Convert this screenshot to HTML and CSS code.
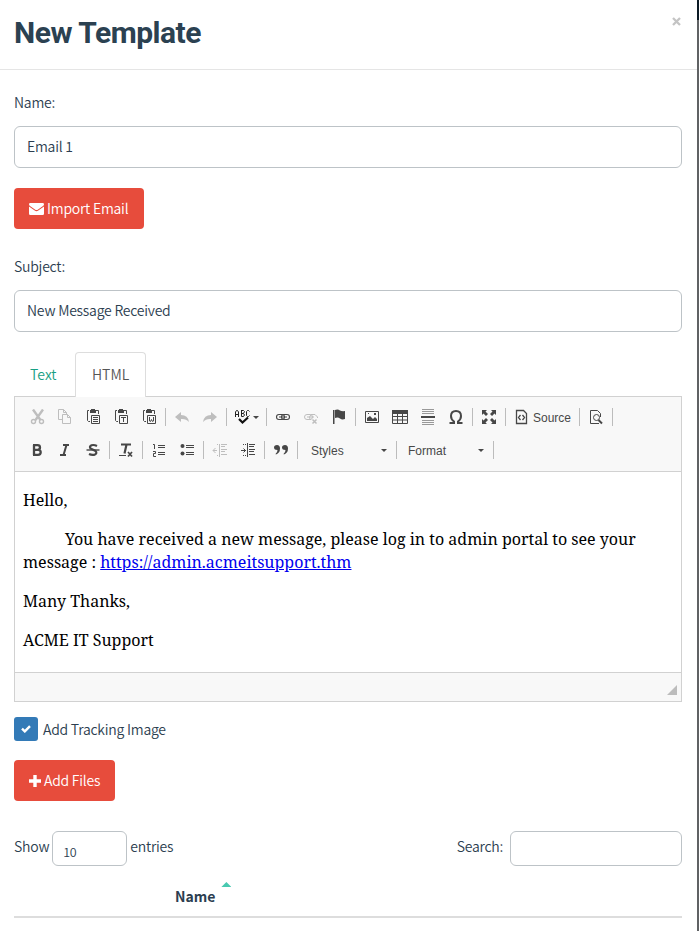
FILE: index.html
```html
<!DOCTYPE html>
<html lang="en">
<head>
<meta charset="utf-8">
<title>New Template</title>
<link rel="stylesheet" href="styles.css">
</head>
<body>
<div class="modal">
  <header class="modal-header">
    <h1>New Template</h1>
    <button class="close" aria-label="Close"><svg width="9" height="9" viewBox="0 0 9 9"><path d="M1 1l7 7M8 1l-7 7" stroke="#c4c4c4" stroke-width="2.300"/></svg></button>
  </header>
  <main class="modal-body">
    <label class="label">Name:</label>
    <div class="field">Email 1</div>
    <button class="btn import"><svg width="15" height="12" viewBox="0 0 15 12"><path fill="#fff" d="M0 1.3Q0 0 1.3 0h12.4Q15 0 15 1.3q0 .9-1 1.7L8.700 6.700q-1.200.8-2.400 0L1 3Q0 2.200 0 1.300zM0 3.600l5.700 4q1.800 1.100 3.600 0l5.700-4v7.100q0 1.300-1.300 1.300H1.300Q0 12 0 10.700z"/></svg><span>Import Email</span></button>
    <label class="label subject">Subject:</label>
    <div class="field">New Message Received</div>
    <nav class="tabs"><a class="tab">Text</a><a class="tab active">HTML</a></nav>
    <section class="editor">
      <div class="toolbar">
        <div class="row">
          <i class="b off"><svg viewBox="0 0 16 16"><path d="M4 0.500l7.500 10.500M14 .5L6.500 11" stroke-width="2.400"/><circle cx="4.500" cy="12.500" r="2" stroke-width="1.400"/><circle cx="12.500" cy="12.500" r="2" stroke-width="1.400"/></svg></i>
          <i class="b off"><svg viewBox="0 0 16 16"><path d="M5.500 10.500h-4v-10h5l3 3v2M6.500.5v3h3M5.500 5.500h5l3 3v6h-8zM10.500 5.500v3h3"/></svg></i>
          <i class="b"><svg viewBox="0 0 16 16"><path d="M4 1.500H2.500v10l1 1H5M11 1.500h2.500V5M6.500 6.500h8v8h-8zM8 8.500h5M8 10.500h5M8 12.500h5"/><path class="f" d="M5 1h1V0h4v1h1v3H5z"/></svg></i>
          <i class="b"><svg viewBox="0 0 16 16"><path d="M4 1.500H2.500v10l1 1H5M11 1.500h2.500V5M6.500 6.500h8v8h-8zM8 8.500h5M10.500 8v5"/><path class="f" d="M5 1h1V0h4v1h1v3H5z"/></svg></i>
          <i class="b"><svg viewBox="0 0 16 16"><path d="M4 1.500H2.500v10l1 1H5M11 1.500h2.500V5M6.500 6.500h8v8h-8zM8.500 8v4l1 .5 1-2 1 2 1-.5V8"/><path class="f" d="M5 1h1V0h4v1h1v3H5z"/></svg></i>
          <i class="sep"></i>
          <i class="b off"><svg viewBox="0 0 16 16"><path class="f" d="M1 8l6-5v3q7 0 8 7-3-3.500-8-3v3z"/></svg></i>
          <i class="b off"><svg viewBox="0 0 16 16"><path class="f" d="M15 8L9 3v3q-7 0-8 7 3-3.500 8-3v3z"/></svg></i>
          <i class="sep"></i>
          <i class="b spell"><svg viewBox="0 0 16 16"><path d="M.5 8V3l1-1.500h1l1 1.500v5M.5 5.500h3M6 1.500h2.500l1 1-1 2 1 1.500-1 1.500H6.500v-6M6.500 4.500h2M14.500 2.500l-1-1h-1l-1 1v4l1 1h1l1-1" stroke="#222"/><path d="M4 10l3.500 3.500L13 8.500" stroke="#111" stroke-width="2.200"/></svg><b class="arrow"></b></i>
          <i class="sep"></i>
          <i class="b"><svg viewBox="0 0 16 16"><rect x="1.500" y="5.500" width="8" height="5" rx="2.500" stroke-width="1.100"/><rect x="6.500" y="5.500" width="8" height="5" rx="2.500" stroke-width="1.100"/><path d="M4 8h8"/></svg></i>
          <i class="b off"><svg viewBox="0 0 16 16"><rect x="1.500" y="5.500" width="8" height="5" rx="2.500"/><path d="M8 10.500H7L6.500 8 8 5.500h4L14.500 8v1M4 8h7" /><path d="M9.500 10.500l4 4M13.500 10.500l-4 4" stroke-width="1.500"/></svg></i>
          <i class="b"><svg viewBox="0 0 16 16"><path class="f" d="M2 1h1.500v14H2zM4 1q3-1 5 .5 2 1 5 .5v8q-3 1-5-.5T4 9z"/></svg></i>
          <i class="sep"></i>
          <i class="b"><svg viewBox="0 0 16 16"><path d="M1.500 2.500h13v11h-13z"/><path class="f" d="M3 12V9l3-2 3 3 2-2 2 2v2zM10 4h2v2h-2zM4 4h1v1H4z"/></svg></i>
          <i class="b"><svg viewBox="0 0 16 16"><path d="M.5 3.500h15v11H.5zM5.500 4v10M10.500 4v10M1 7.500h14M1 11h14"/><path class="f" d="M0 1h16v4H0z"/></svg></i>
          <i class="b"><svg viewBox="0 0 16 16"><path d="M2 .5h12M2 2.500h12M2 4.500h12M2 11.500h12M2 13.500h12M2 15.500h12" stroke="#999"/><path class="f" d="M1 7h14v2H1z"/></svg></i>
          <i class="b"><svg viewBox="0 0 16 16"><path d="M1.500 14h4.500V12.500Q3 10.500 3 7 3 2 8 2t5 5Q13 10.500 10 12.500V14h4.500" stroke-width="2"/></svg></i>
          <i class="sep"></i>
          <i class="b"><svg viewBox="0 0 16 16"><path class="f" d="M1 1h5L4.500 2.500 7 5 5 7 2.500 4.500 1 6zM15 1v5l-1.500-1.500L11 7 9 5l2.500-2.500L10 1zM1 15v-5l1.500 1.500L5 9l2 2-2.500 2.500L6 15zM15 15h-5l1.500-1.500L9 11l2-2 2.500 2.500L15 10z"/></svg></i>
          <i class="sep"></i>
          <i class="b source"><svg viewBox="0 0 16 16"><path d="M2.500 1.500h7l3 3v10h-10zM6.500 6l-2 2.500 2 2.500M8.500 6l2 2.500-2 2.500" stroke-width="1.300"/></svg><span>Source</span></i>
          <i class="sep"></i>
          <i class="b"><svg viewBox="0 0 16 16"><path d="M12.500 8V4.500l-3-3h-7v13H11"/><circle cx="8.500" cy="8.500" r="3"/><path d="M10.500 11l3.500 3.500" stroke-width="2"/></svg></i>
          <i class="sep"></i>
        </div>
        <div class="row">
          <i class="b"><svg viewBox="0 0 16 16"><path d="M5 3v10M4 3.200h4.500q2.500 0 2.500 2.300T8.500 7.800H5h4q2.700 0 2.700 2.500T9 12.800H4" stroke-width="2.300"/></svg></i>
          <i class="b"><svg viewBox="0 0 16 16"><path d="M6 3h6M3 13h6M9.500 3l-3 10" stroke-width="2"/></svg></i>
          <i class="b"><svg viewBox="0 0 16 16"><path d="M12 4Q9 2.500 6.500 3.300 4 4.500 5.500 6.500L10.500 9q2 2.200-.7 3.600Q7 13.500 4 12" stroke-width="2.200"/><path d="M1.500 8h13" stroke-width="1.400"/></svg></i>
          <i class="sep"></i>
          <i class="b"><svg viewBox="0 0 16 16"><path d="M3 2.500h10M8.500 2.500l-2 9" stroke-width="2.200"/><path d="M1 13.500h7"/><path d="M10 10l4 4.500M14 10l-4 4.500" stroke-width="1.700"/></svg></i>
          <i class="sep"></i>
          <i class="b"><svg viewBox="0 0 16 16"><path d="M2 2.500h1.500V7M2 9.500h2.500v2h-2v3H5M7 3.500h7M7 5.500h7M7 10.500h7M7 12.500h7"/></svg></i>
          <i class="b"><svg viewBox="0 0 16 16"><circle class="f" cx="3.500" cy="4" r="2"/><circle class="f" cx="3.500" cy="11.500" r="2"/><path d="M7 3.500h8M7 5.500h8M7 10.500h8M7 12.500h8"/></svg></i>
          <i class="sep"></i>
          <i class="b off"><svg viewBox="0 0 16 16"><path d="M7.500 2v13M9 2.500h6M9 4.500h4M9 7.500h6M9 9.500h4M9 12.500h6M1 8.500h4M3.500 6L1 8.500 3.500 11M5 2.500h1M5 13.500h1"/></svg></i>
          <i class="b"><svg viewBox="0 0 16 16"><path d="M7.500 1v14M9 2.500h6M9 4.500h5M9 7.500h6M9 9.500h5M9 12.500h6M1 8.500h5M3.500 6.500l2 2-2 2M3 2.500h1M5 2.500h1M3 13.500h1M5 13.500h1"/></svg></i>
          <i class="sep"></i>
          <i class="b"><svg viewBox="0 0 16 16"><path class="f" d="M4 3q3 0 3 3.500Q7 11 3 12.500L2.500 12Q4.500 10.500 4.500 8 1 8 1 5.500 1 3 4 3zM12 3q3 0 3 3.500 0 4.500-4 6l-.5-.5q2-1.500 2-4Q9 8 9 5.500 9 3 12 3z"/></svg></i>
          <i class="sep"></i>
          <div class="combo styles"><span>Styles</span><b class="arrow"></b></div>
          <i class="sep"></i>
          <div class="combo"><span>Format</span><b class="arrow"></b></div>
          <i class="sep"></i>
        </div>
      </div>
      <div class="content">
        <p>Hello,</p>
        <p><span class="indent">You have received a new message, please log in to admin portal to see your</span><br>message : <a>https://admin.acmeitsupport.thm</a></p>
        <p>Many Thanks,</p>
        <p>ACME IT Support</p>
      </div>
      <div class="bottom"><i class="grip"></i></div>
    </section>
    <label class="check"><span class="box"><svg width="10" height="8" viewBox="0 0 10 8"><path d="M1 3.700l2.800 2.700L9 1.200" fill="none" stroke="#fff" stroke-width="2.400"/></svg></span><span>Add Tracking Image</span></label>
    <button class="btn add"><svg width="12" height="12" viewBox="0 0 12 12"><path fill="#fff" d="M4.300 0h3.400v4.300H12v3.400H7.700V12H4.300V7.700H0V4.300h4.300z"/></svg><span>Add Files</span></button>
    <div class="controls">
      <span>Show</span><div class="length">10</div><span>entries</span>
      <span class="search-label">Search:</span><div class="search"></div>
    </div>
    <div class="thead"><span>Name</span><i class="sort"></i></div>
  </main>
</div>
<aside class="backdrop"></aside>
</body>
</html>
```
FILE: styles.css
```css
* { box-sizing: border-box; }
body {
  margin: 0;
  height: 931px;
  display: flex;
  overflow: hidden;
  background: #fff;
  color: #2c3e50;
  font: 14px/20px "Noto Sans CJK SC", sans-serif;
  font-weight: 350;
  letter-spacing: -.23px;
}
button { font: inherit; letter-spacing: inherit; border: 0; }
.modal { width: 697px; }
.backdrop {
  width: 2px;
  background: linear-gradient(#0c1a25 20px, #606264 20px);
}
.modal-header {
  height: 70px;
  border-bottom: 1px solid #e5e5e5;
  padding: 15px 16px 0 14px;
  display: flex;
  justify-content: space-between;
}
h1 { margin: 0; font: 700 30px/36px Roboto, sans-serif; letter-spacing: -.48px; color: #2b4151; }
.close { background: none; padding: 2px 0 0; height: 11px; line-height: 0; display: flex; align-items: flex-start; }
.modal-body { padding: 22px 15px 0 14px; }
.label { display: block; height: 20px; margin-bottom: 14px; }
.subject { margin-top: 27px; }
.field {
  height: 42px;
  border: 1px solid #bdc3c7;
  border-radius: 6px;
  padding: 9px 12px;
}
.btn {
  display: flex;
  align-items: center;
  gap: 3px;
  height: 41px;
  padding: 0 15px;
  background: #e74c3c;
  color: #fff;
  border-radius: 4px;
  white-space: nowrap;
}
.btn svg { flex: none; }
.btn span { margin-top: -1px; }
.import { margin-top: 20px; width: 130px; }
.add { margin-top: 19px; width: 101px; }
.tabs { display: flex; height: 45px; margin-top: 20px; margin-bottom: -1px; position: relative; letter-spacing: 0; }
.tab { width: 61px; padding: 12px 0 0 16px; color: #18a085; }
.active {
  width: 71px;
  color: #555;
  background: linear-gradient(#fff 44px, #f8f8f8 44px);
  border: 1px solid #ddd;
  border-bottom: 0;
  border-radius: 4px 4px 0 0;
  padding-top: 11px;
}
.editor { border: 1px solid #d1d1d1; height: 306px; letter-spacing: 0; }
.toolbar {
  height: 75px;
  background: #f8f8f8;
  border-bottom: 1px solid #d1d1d1;
  padding: 6px 8px 0;
}
.row { display: flex; height: 28px; margin-bottom: 5px; align-items: center; }
.b { width: 28px; height: 28px; padding: 6px; flex: none; font-style: normal; }
.b svg {
  display: block;
  width: 16px;
  height: 16px;
  flex: none;
  fill: none;
  stroke: #474747;
}
.b .f { fill: #474747; stroke: none; }
.off svg { opacity: .32; }
.sep { width: 1px; height: 18px; background: #bcbcbc; margin: 0 2px; flex: none; }
.spell { width: 35px; display: flex; align-items: center; gap: 2px; }
.arrow { border: 3px solid transparent; border-top-color: #474747; border-bottom: 0; flex: none; }
.source {
  width: 69px;
  display: flex;
  align-items: center;
  gap: 3px;
  font: 12px/16px "Liberation Sans", sans-serif;
  color: #484848;
}
.source span, .combo span { padding-top: 2px; }
.combo {
  width: 92px;
  display: flex;
  justify-content: space-between;
  align-items: center;
  padding: 0 7px 0 9px;
  font: 12px/16px "Liberation Sans", sans-serif;
  color: #484848;
}
.styles { width: 94px; padding-left: 11px; }
.content {
  height: 200px;
  padding: 17px 8px;
  color: #000;
  font: 16px/23px "Noto Serif", "Droid Serif", "DejaVu Serif Condensed", "DejaVu Serif", serif;
}
.content p { margin: 0 0 16px; white-space: nowrap; }
.indent { margin-left: 42px; }
.content a { color: #00e; text-decoration: underline; }
.bottom {
  height: 29px;
  background: #f8f8f8;
  border-top: 1px solid #d1d1d1;
  display: flex;
  justify-content: flex-end;
  align-items: flex-end;
  padding: 0 4px 6px;
}
.grip { border: 5px solid #bcbcbc; border-left-color: transparent; border-top-color: transparent; }
.check { display: flex; align-items: center; gap: 5px; height: 24px; margin-top: 15px; }
.box {
  width: 24px;
  height: 24px;
  border-radius: 3px;
  background: #337ab7;
  display: flex;
  align-items: center;
  justify-content: center;
}
.controls { display: flex; margin-top: 30px; line-height: 30px; height: 35px; }
.length {
  width: 75px;
  border: 1px solid #bdc3c7;
  border-radius: 6px;
  margin: 0 3px 0 3px;
  padding: 5px 10px;
  font-size: 12.500px;
  letter-spacing: -.3px;
}
.search-label { margin-left: auto; }
.search { width: 172px; border: 1px solid #bdc3c7; border-radius: 6px; margin-left: 7px; }
.thead {
  display: flex;
  height: 52px;
  border-bottom: 2px solid #ddd;
  padding: 20px 0 0 161px;
  font-weight: 700;
  letter-spacing: 0;
}
.sort {
  width: 10px;
  height: 5px;
  margin: -4px 0 0 6px;
  background: #48c9b0;
  clip-path: polygon(50% 0, 100% 100%, 0 100%);
}
```
